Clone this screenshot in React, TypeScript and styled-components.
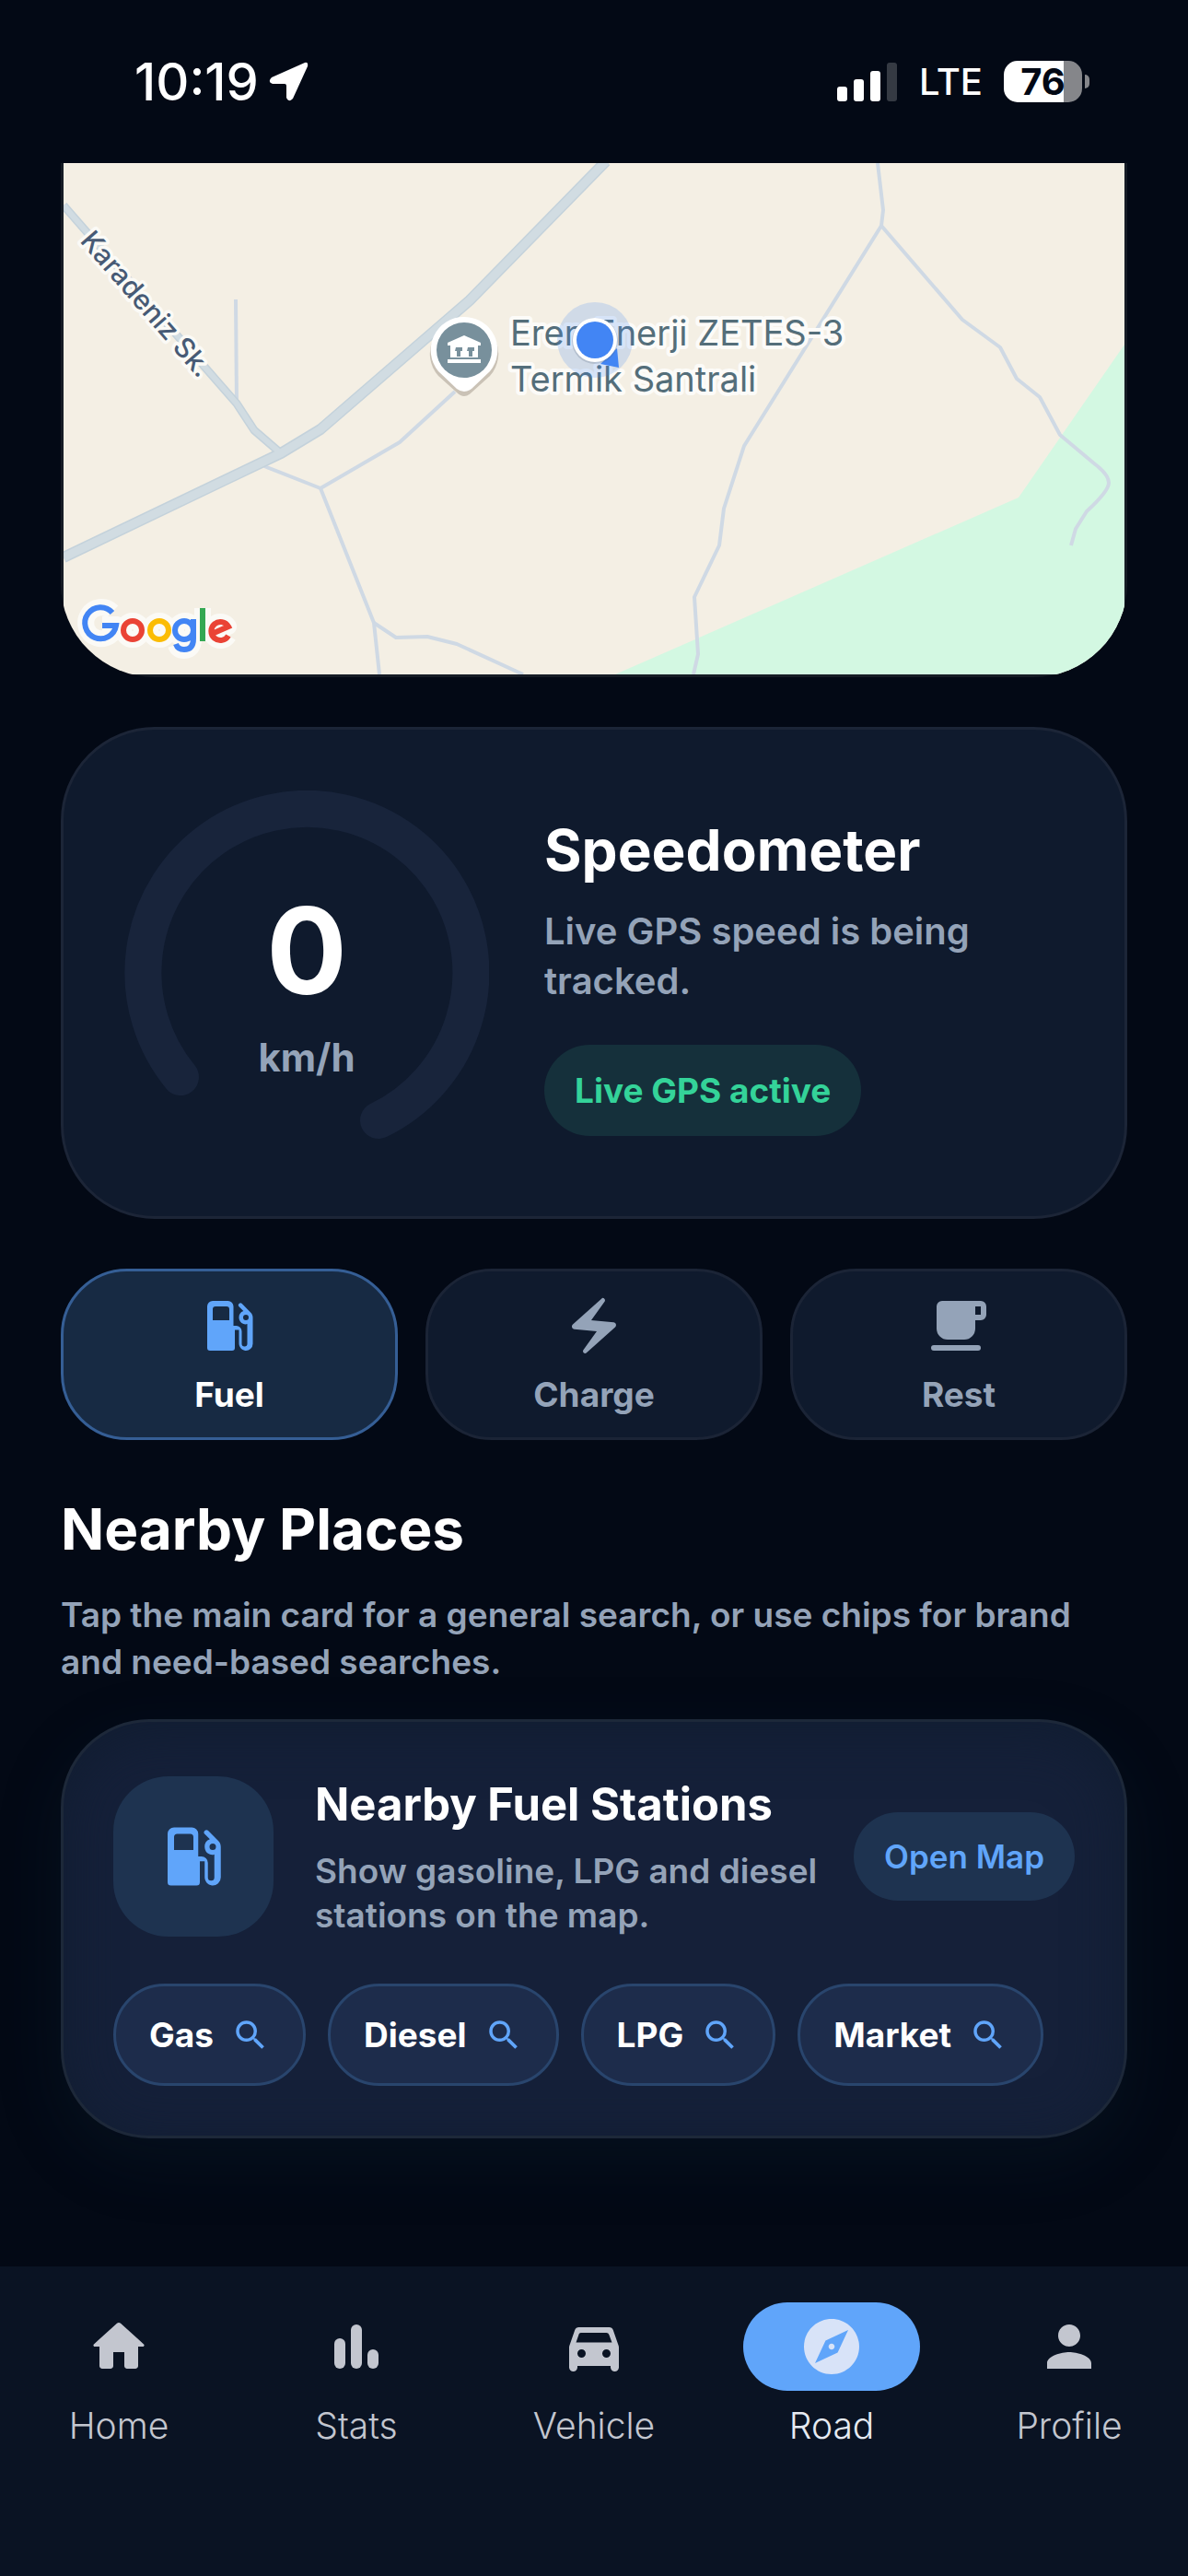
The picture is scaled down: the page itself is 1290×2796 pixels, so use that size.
import React, { useState } from 'react';
import styled, { createGlobalStyle } from 'styled-components';
import { MdSearch, MdExplore, MdPerson } from 'react-icons/md';

const GlobalStyle = createGlobalStyle`
  * {
    box-sizing: border-box;
  }

  body {
    margin: 0;
    background: #030915;
    color: #fff;
    font-family: Inter, 'Liberation Sans', sans-serif;
    -webkit-font-smoothing: antialiased;
  }

  button {
    font: inherit;
    color: inherit;
    border: 0;
    padding: 0;
    background: none;
    cursor: pointer;
  }

  h1, h2, p {
    margin: 0;
  }
`;

const Screen = styled.div`
  display: flex;
  flex-direction: column;
  min-height: 100vh;
`;

// Status bar
const StatusBar = styled.header`
  display: flex;
  justify-content: space-between;
  align-items: center;
  height: 177px;
  padding: 0 107px 0 146px;
`;

const StatusGroup = styled.div<{ $gap: number }>`
  display: flex;
  align-items: center;
  gap: ${({ $gap }) => $gap}px;
`;

const Clock = styled.span`
  font-size: 56px;
  line-height: 64px;
  font-weight: 500;
`;

const Network = styled.span`
  font-size: 40px;
  line-height: 56px;
  font-weight: 500;
`;

const Battery = styled.div`
  display: flex;
  align-items: center;
  gap: 3px;
`;

const BatteryBody = styled.div`
  display: flex;
  align-items: center;
  justify-content: center;
  width: 85px;
  height: 45px;
  border-radius: 15px;
  background: linear-gradient(to right, #fff 76%, #85868a 76%);
  color: #020814;
  font-size: 40px;
  line-height: 45px;
  font-weight: 700;
`;

const BatteryTip = styled.div`
  width: 5px;
  height: 15px;
  border-radius: 0 5px 5px 0;
  background: #85868a;
`;

// Page content
const Content = styled.main`
  display: flex;
  flex-direction: column;
  flex: 1;
  padding: 0 66px;
`;

const MapCard = styled.section`
  overflow: hidden;
  padding: 0 3px 3px;
  border-radius: 0 0 102px 102px;
  background: #161c25;

  svg {
    display: block;
    width: 100%;
    height: auto;
  }
`;

const SpeedCard = styled.section`
  display: flex;
  align-items: center;
  gap: 60px;
  min-height: 534px;
  margin-top: 54px;
  padding: 0 66px;
  border: 3px solid #1c2537;
  border-radius: 102px;
  background: #0f1a2d;
`;

const Gauge = styled.div`
  display: grid;
  flex: none;
  width: 396px;
  height: 396px;

  > * {
    grid-area: 1 / 1;
  }
`;

const GaugeReading = styled.div`
  display: flex;
  flex-direction: column;
  align-items: center;
  justify-content: center;
  padding-top: 4px;
`;

const SpeedValue = styled.span`
  font-size: 130px;
  line-height: 170px;
  font-weight: 700;
`;

const SpeedUnit = styled.span`
  margin-top: 9px;
  font-size: 42px;
  line-height: 44px;
  font-weight: 700;
  color: #94a3b8;
`;

const SpeedInfo = styled.div`
  display: flex;
  flex-direction: column;
  align-items: flex-start;
  padding-top: 4px;
`;

const Title = styled.h1`
  font-size: 62px;
  line-height: 78px;
  font-weight: 700;
`;

const Text = styled.p<{ $size?: number; $lineHeight?: number }>`
  font-size: ${({ $size }) => $size ?? 37}px;
  line-height: ${({ $lineHeight }) => $lineHeight ?? 51}px;
  font-weight: 600;
  color: #94a3b8;
`;

const SpeedText = styled(Text)`
  margin-top: 22px;
`;

const LiveBadge = styled.span`
  margin-top: 42px;
  padding: 0 33px;
  border-radius: 50px;
  background: #15303b;
  color: #34d399;
  font-size: 37px;
  line-height: 99px;
  font-weight: 700;
`;

const Tabs = styled.div`
  display: grid;
  grid-template-columns: repeat(3, 1fr);
  gap: 30px;
  margin-top: 54px;
`;

const Tab = styled.button<{ $active: boolean }>`
  display: flex;
  flex-direction: column;
  align-items: center;
  justify-content: center;
  gap: 15px;
  height: 186px;
  border: 3px solid ${({ $active }) => ($active ? '#355e95' : '#1b2436')};
  border-radius: 72px;
  background: ${({ $active }) => ($active ? '#172a43' : '#0f1a2d')};
  color: ${({ $active }) => ($active ? '#fff' : '#94a3b8')};
  font-size: 37px;
  line-height: 48px;
  font-weight: 700;

  svg {
    width: 72px;
    height: 72px;
    color: ${({ $active }) => ($active ? '#60a5fa' : '#94a3b8')};
  }
`;

const SectionHead = styled.div`
  display: flex;
  flex-direction: column;
  gap: 28px;
  margin-top: 58px;
`;

const PlaceCard = styled.section`
  display: flex;
  flex-direction: column;
  gap: 50px;
  margin-top: 37px;
  padding: 57px 54px 54px;
  border: 3px solid #1d2839;
  border-radius: 96px;
  background: #152039;
  box-shadow: 0 24px 72px rgba(24, 50, 70, 0.18), inset 0 12px 60px #111d31;
`;

const PlaceRow = styled.div`
  display: flex;
  align-items: center;
`;

const PlaceIcon = styled.div`
  display: flex;
  align-items: center;
  justify-content: center;
  flex: none;
  width: 174px;
  height: 174px;
  margin-right: 45px;
  border-radius: 60px;
  background: #1e3350;
  color: #60a5fa;

  svg {
    width: 84px;
    height: 84px;
  }
`;

const PlaceText = styled.div`
  flex: 1;
`;

const PlaceTitle = styled.h2`
  margin-bottom: 15px;
  font-size: 49px;
  line-height: 66px;
  font-weight: 700;
`;

const OpenMap = styled.button`
  flex: none;
  height: 96px;
  padding: 0 33px;
  border-radius: 48px;
  background: #1e3350;
  color: #60a5fa;
  font-size: 35px;
  font-weight: 600;
`;

const Chips = styled.div`
  display: flex;
  flex-wrap: wrap;
  gap: 24px;
`;

const Chip = styled.button`
  display: flex;
  align-items: center;
  gap: 19px;
  height: 111px;
  padding: 0 36px;
  border: 3px solid #29456d;
  border-radius: 56px;
  background: #1d2c4b;
  font-size: 37px;
  font-weight: 700;

  svg {
    width: 42px;
    height: 42px;
    color: #60a5fa;
  }
`;

// Bottom navigation
const NavBar = styled.nav`
  display: grid;
  grid-template-columns: repeat(5, 1fr);
  align-items: start;
  height: 336px;
  padding-top: 39px;
  background: #0a1323;
`;

const NavItem = styled.button<{ $active: boolean }>`
  display: flex;
  flex-direction: column;
  align-items: center;
  gap: 14px;
  color: ${({ $active }) => ($active ? '#e6eaf2' : '#c3c6cf')};
  font-size: 39px;
  line-height: 48px;
  font-weight: 300;
`;

const NavIndicator = styled.span<{ $active: boolean }>`
  display: flex;
  align-items: center;
  justify-content: center;
  width: 192px;
  height: 96px;
  border-radius: 48px;
  background: ${({ $active }) => ($active ? '#60a5fa' : 'transparent')};
  color: ${({ $active }) => ($active ? '#d8e3f8' : '#c3c6cf')};

  svg {
    width: 72px;
    height: 72px;
  }
`;

const Icon = ({ children }: { children: React.ReactNode }) => (
  <svg viewBox="0 0 24 24" fill="currentColor" aria-hidden="true">
    {children}
  </svg>
);

const FuelIcon = () => (
  <Icon>
    <path d="M19.77 7.23l.01-.01-3.19-3.19a.75.75 0 0 0-1.06 0 .75.75 0 0 0 0 1.06l1.58 1.58a2.5 2.5 0 0 0 .03 4.69c.5.2.94.17 1.36-.01v7.15a1 1 0 0 1-2 0V14a2 2 0 0 0-2-2h-1V5a2 2 0 0 0-2-2H6a2 2 0 0 0-2 2v15a1 1 0 0 0 1 1h8a1 1 0 0 0 1-1v-6.500h1.500v4.860c0 1.310.940 2.500 2.240 2.630A2.500 2.500 0 0 0 20.500 18.500V9c0-.690-.280-1.320-.730-1.770zM12 10H6V6a1 1 0 0 1 1-1h4a1 1 0 0 1 1 1v4zm6 0a1 1 0 1 1 0-2 1 1 0 0 1 0 2z" />
  </Icon>
);

const BoltIcon = () => (
  <Icon>
    <path d="M14.69 2.21L4.330 11.490c-.640.580-.280 1.650.580 1.730L13 14l-4.850 6.760c-.220.310-.190.740.080 1.010.300.300.770.310 1.080.020l10.360-9.280c.640-.580.280-1.650-.580-1.730L11 10l4.850-6.760c.220-.310.190-.740-.080-1.010a.770.770 0 0 0-1.080-.020z" />
  </Icon>
);

const CafeIcon = () => (
  <Icon>
    <path d="M20 3H6a2 2 0 0 0-2 2v8a4 4 0 0 0 4 4h6a4 4 0 0 0 4-4v-3h2a2 2 0 0 0 2-2V5a2 2 0 0 0-2-2zm0 5h-2V5h2v3zM3 21h16a1 1 0 0 0 0-2H3a1 1 0 0 0 0 2z" />
  </Icon>
);

const HomeIcon = () => (
  <Icon>
    <path d="M10 19v-5h4v5c0 .550.450 1 1 1h3c.550 0 1-.450 1-1v-7h1.700c.460 0 .680-.570.330-.870L12.670 3.600a1.010 1.010 0 0 0-1.340 0l-8.360 7.530c-.340.300-.130.870.330.870H5v7c0 .550.450 1 1 1h3c.550 0 1-.450 1-1z" />
  </Icon>
);

const StatsIcon = () => (
  <Icon>
    <rect x="4" y="9" width="4" height="11" rx="2" />
    <rect x="10" y="4" width="4" height="16" rx="2" />
    <rect x="16" y="13" width="4" height="7" rx="2" />
  </Icon>
);

const CarIcon = () => (
  <Icon>
    <path d="M18.920 6.010C18.720 5.420 18.160 5 17.500 5h-11c-.660 0-1.210.420-1.420 1.010L3.110 11.680a2 2 0 0 0-.110.660v7.160a1.500 1.500 0 0 0 3 0V19h12v.500a1.500 1.500 0 0 0 3 0v-7.160c0-.220-.040-.450-.110-.660l-1.970-5.670zM7.500 16a1.500 1.500 0 1 1 0-3 1.500 1.500 0 0 1 0 3zm9 0a1.500 1.500 0 1 1 0-3 1.500 1.500 0 0 1 0 3zM5.500 10.500l1.100-3.180a1 1 0 0 1 .900-.320h9c.420 0 .800.250.940.660L18.500 10.500h-13z" />
  </Icon>
);

const RoadMap = () => (
  <svg viewBox="69 177 1152 555" role="img" aria-label="Map">
    <rect x="69" y="177" width="1152" height="555" fill="#f4efe4" />
    <path d="M1221 374 L1106 540 L668 732 H1221 Z" fill="#d3f8e2" />
    <g fill="none" stroke="#cfd9e4" strokeWidth="4" strokeLinejoin="round">
      <path d="M256 325 L257 440" />
      <path d="M287 506 L348 530 L434 480 L494 425" />
      <path d="M348 530 L406 676 L412 732" />
      <path d="M406 676 L430 692 L464 691 L496 699 L568 732" />
      <path d="M953 177 L959 228 L957 245 L808 484 L786 552 L781 592 L754 648 L758 710 L753 732" />
      <path d="M957 245 L1045 347 L1086 377 L1104 411 L1129 431 L1151 472 L1188 503 Q1204 515 1204 524 Q1204 533 1180 555 L1168 574 L1163 592" />
    </g>
    <g fill="none" strokeLinejoin="round">
      <path d="M69 223 L257 438 L276 467 L305 492" stroke="#c4d2db" strokeWidth="9" />
      <path d="M69 605 L305 492 L348 466 L510 326 L658 175" stroke="#c4d2db" strokeWidth="12" />
      <path d="M69 223 L257 438 L276 467 L305 492" stroke="#d1dce2" strokeWidth="6" />
      <path d="M69 605 L305 492 L348 466 L510 326 L658 175" stroke="#d1dce2" strokeWidth="9" />
    </g>
    <text
      transform="translate(86 262) rotate(49)"
      fontSize="30"
      fontWeight="500"
      fill="#475a75"
      stroke="#fbfaf6"
      strokeWidth="7"
      strokeLinejoin="round"
      paintOrder="stroke"
    >
      Karadeniz Sk.
    </text>
    <g fontSize="38" fill="#546e7a" stroke="#fcfbf8" strokeWidth="8" strokeLinejoin="round" paintOrder="stroke">
      <text x="554" y="375">Eren Enerji ZETES-3</text>
      <text x="554" y="425">Termik Santrali</text>
    </g>
    {/* place marker */}
    <path d="M504 348 a36 36 0 0 1 28 60 L512 426 Q504 434 496 426 L476 408 A36 36 0 0 1 504 348 Z" fill="#7a6f62" opacity="0.35" />
    <path d="M504 344 a36 36 0 0 1 28 59 L512 422 Q504 428 496 422 L476 403 A36 36 0 0 1 504 344 Z" fill="#fff" />
    <circle cx="504" cy="380" r="30" fill="#78909c" />
    <path d="M504 364 L522 372 V375 H519 V388 H489 V375 H486 V372 Z M486 390 H522 V394 H486 Z" fill="#fff" />
    <path d="M495 377 H502 V381 H500 V387 H496 V381 H494 Z M508 377 H515 V381 H513 V387 H509 V381 H507 Z" fill="#78909c" />
    {/* current position */}
    <circle cx="646" cy="369" r="41" fill="#4285f4" opacity="0.2" />
    <path d="M652 395 L672 399 L670 378 Z" fill="#4285f4" />
    <circle cx="646" cy="370" r="25" fill="#5a6b80" opacity="0.25" />
    <circle cx="646" cy="369" r="24" fill="#fff" />
    <circle cx="646" cy="369" r="20" fill="#4285f4" />
    <g fill="none" strokeLinecap="butt">
      <g stroke="#fbfaf6" strokeWidth="18" strokeLinejoin="round">
        <path d="M122 664 A17 17 0 1 0 127 678 H111" />
        <circle cx="144" cy="684" r="10" />
        <circle cx="173" cy="684" r="10" />
        <circle cx="201" cy="684" r="10" />
        <path d="M210 673 V693 Q210 706 200 706 Q193 706 191 700" />
        <path d="M220 660 V696" />
        <path d="M230 688 L248 680 A10 10 0 1 0 248 690" />
      </g>
      <g strokeWidth="6">
        <path d="M122 665 A17 17 0 1 0 126 679 H111" stroke="#4285f4" />
        <circle cx="144" cy="684" r="10" stroke="#ea4335" />
        <circle cx="173" cy="684" r="10" stroke="#fbbc04" />
        <circle cx="200" cy="684" r="10" stroke="#4285f4" />
        <path d="M210 672 V693 Q210 705 200 705 Q193 705 191 699" stroke="#4285f4" />
        <path d="M220 660 V696" stroke="#34a853" />
        <path d="M230 688 L248 680 A10 10 0 1 0 248 690" stroke="#ea4335" />
      </g>
    </g>
  </svg>
);

const places = [
  { label: 'Fuel', icon: <FuelIcon /> },
  { label: 'Charge', icon: <BoltIcon /> },
  { label: 'Rest', icon: <CafeIcon /> },
];

const chips = ['Gas', 'Diesel', 'LPG', 'Market'];

const navItems = [
  { label: 'Home', icon: <HomeIcon /> },
  { label: 'Stats', icon: <StatsIcon /> },
  { label: 'Vehicle', icon: <CarIcon /> },
  { label: 'Road', icon: <MdExplore /> },
  { label: 'Profile', icon: <MdPerson /> },
];

const App: React.FC = () => {
  const [place, setPlace] = useState('Fuel');
  const [page, setPage] = useState('Road');

  return (
    <>
      <GlobalStyle />
      <Screen>
        <StatusBar>
          <StatusGroup $gap={11}>
            <Clock>10:19</Clock>
            <svg width="43" height="43" viewBox="0 0 43 43" fill="#fff" aria-hidden="true">
              <path d="M39 1 L3 17 Q-2 22 4 24 H17 Q19 24 19 26 V39 Q21 45 26 40 L42 5 Q43 0 39 1 Z" />
            </svg>
          </StatusGroup>
          <StatusGroup $gap={23}>
            <svg width="66" height="42" viewBox="0 0 66 42" fill="#fff" aria-hidden="true">
              <rect x="0" y="26" width="11" height="16" rx="3" />
              <rect x="18" y="18" width="11" height="24" rx="3" />
              <rect x="36" y="9" width="11" height="33" rx="3" />
              <rect x="54" y="0" width="11" height="42" rx="3" opacity="0.2" />
            </svg>
            <Network>LTE</Network>
            <Battery>
              <BatteryBody>76</BatteryBody>
              <BatteryTip />
            </Battery>
          </StatusGroup>
        </StatusBar>

        <Content>
          <MapCard>
            <RoadMap />
          </MapCard>

          <SpeedCard>
            <Gauge>
              <svg viewBox="0 0 396 396" aria-hidden="true">
                <path d="M61 311 A178 178 0 1 1 276 358" fill="none" stroke="#18243b" strokeWidth="40" strokeLinecap="round" />
              </svg>
              <GaugeReading>
                <SpeedValue>0</SpeedValue>
                <SpeedUnit>km/h</SpeedUnit>
              </GaugeReading>
            </Gauge>
            <SpeedInfo>
              <Title>Speedometer</Title>
              <SpeedText $size={40} $lineHeight={54}>
                Live GPS speed is being tracked.
              </SpeedText>
              <LiveBadge>Live GPS active</LiveBadge>
            </SpeedInfo>
          </SpeedCard>

          <Tabs>
            {places.map(({ label, icon }) => (
              <Tab key={label} $active={label === place} onClick={() => setPlace(label)}>
                {icon}
                {label}
              </Tab>
            ))}
          </Tabs>

          <SectionHead>
            <Title as="h2">Nearby Places</Title>
            <Text>Tap the main card for a general search, or use chips for brand and need-based searches.</Text>
          </SectionHead>

          <PlaceCard>
            <PlaceRow>
              <PlaceIcon>
                <FuelIcon />
              </PlaceIcon>
              <PlaceText>
                <PlaceTitle>Nearby Fuel Stations</PlaceTitle>
                <Text $lineHeight={48}>Show gasoline, LPG and diesel stations on the map.</Text>
              </PlaceText>
              <OpenMap>Open Map</OpenMap>
            </PlaceRow>
            <Chips>
              {chips.map((chip) => (
                <Chip key={chip}>
                  {chip}
                  <MdSearch />
                </Chip>
              ))}
            </Chips>
          </PlaceCard>
        </Content>

        <NavBar>
          {navItems.map(({ label, icon }) => (
            <NavItem key={label} $active={label === page} onClick={() => setPage(label)}>
              <NavIndicator $active={label === page}>{icon}</NavIndicator>
              {label}
            </NavItem>
          ))}
        </NavBar>
      </Screen>
    </>
  );
};

export default App;
